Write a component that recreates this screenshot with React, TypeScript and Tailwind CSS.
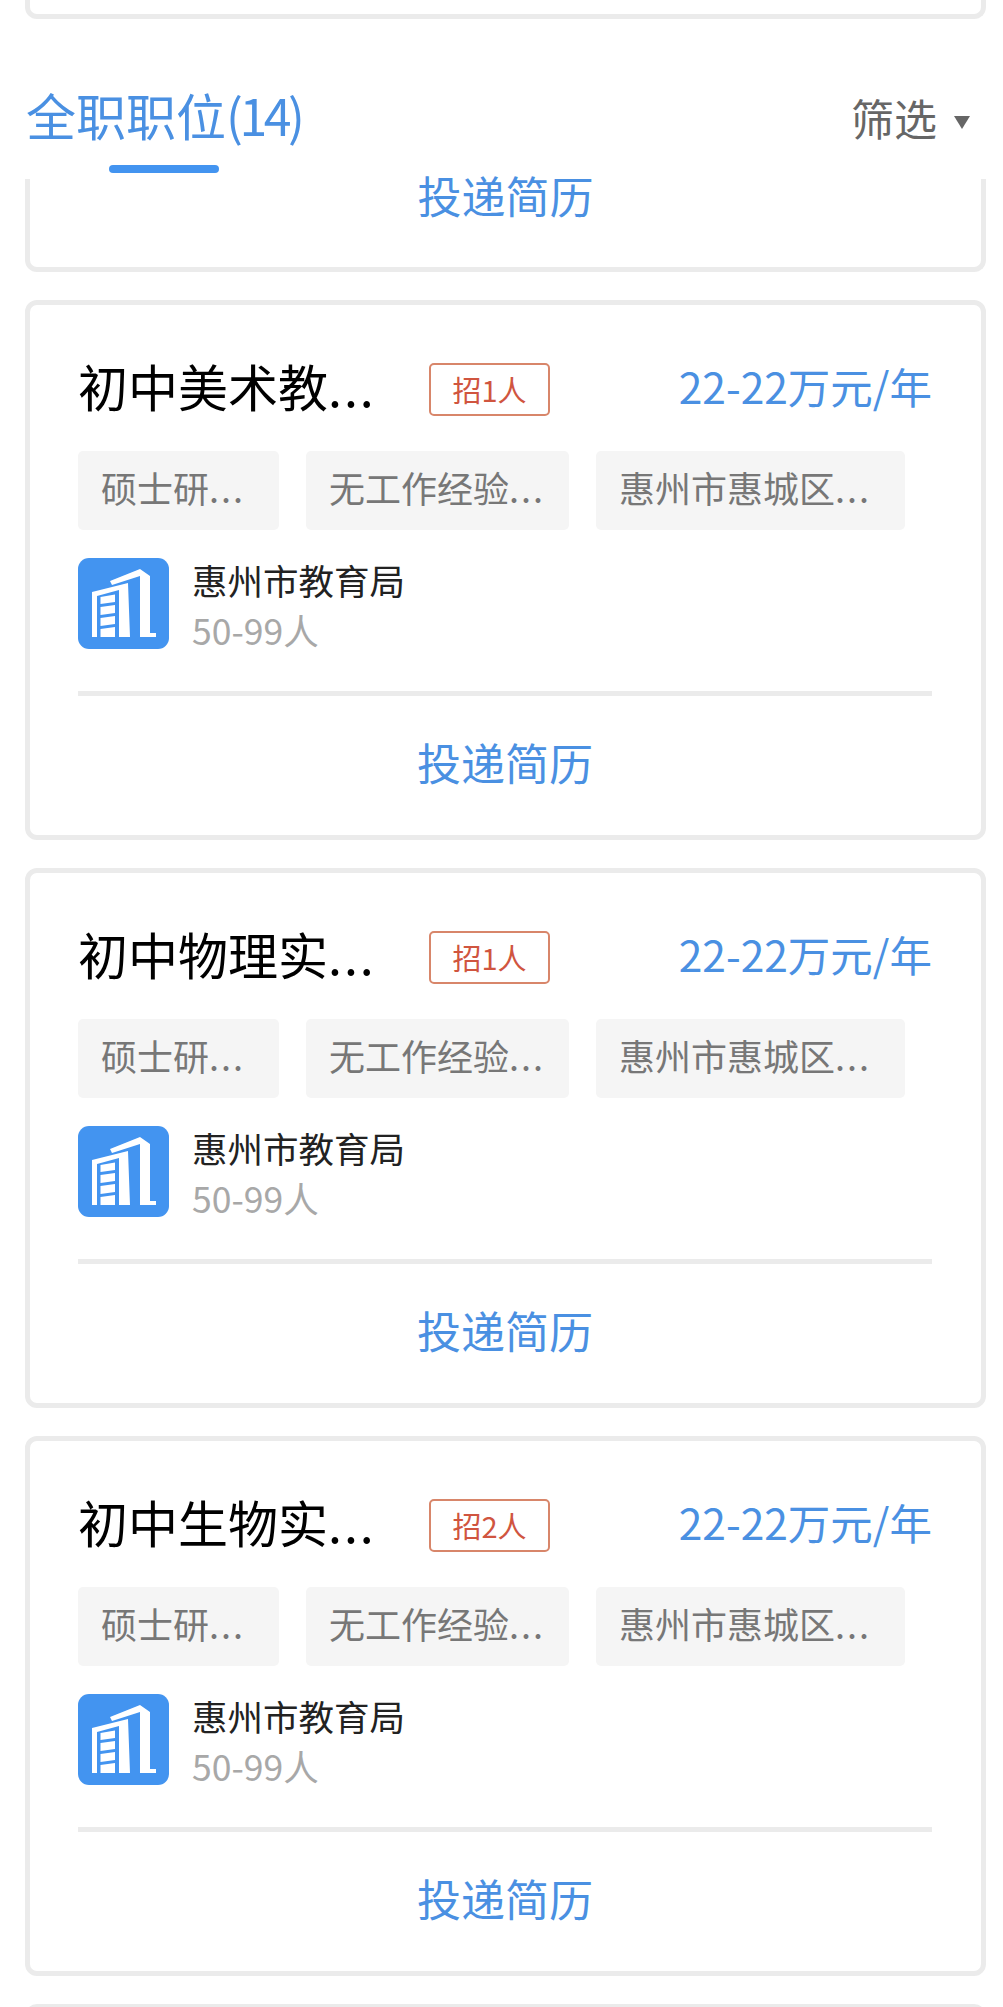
const jobs = [
  { title: "初中美术教", hire: "招1人" },
  { title: "初中物理实", hire: "招1人" },
  { title: "初中生物实", hire: "招2人" },
];

const font = { fontFamily: '"Noto Sans CJK SC", sans-serif' };

const BuildingLogo = () => (
  <svg viewBox="0 0 91 91" className="w-[91px] h-[91px] shrink-0">
    <rect width="91" height="91" rx="11" fill="#4394f0" />
    <g fill="#fff">
      <path d="M14 34 L50 25 L52 79 L41 79 L41 32 L19 38 L19 79 L14 79 Z" />
      <path d="M22.5 39 L37 36.5 L37 44 L22.5 46 Z" />
      <path d="M22.5 49 L37 47 L37 55 L22.5 57 Z" />
      <path d="M22.5 60 L37 58 L37 66 L22.5 68 Z" />
      <path d="M22.5 71 L37 69 L37 79 L22.5 79 Z" />
      <path d="M32 23 L62 11 L72 18 L72 75 L78 75 L78 79 L62 79 L62 18 L34 27 Z" />
    </g>
  </svg>
);

const Dots = () => <span className="tracking-[2px]">...</span>;

const Tag = ({ text, width }: { text: string; width: string }) => (
  <span className={`flex items-center h-[79px] pl-[23px] pb-[8px] rounded-[5px] bg-[#f5f5f5] text-[36px] text-[#777777] ${width}`}>
    {text}
    <Dots />
  </span>
);

const JobCard = ({ title, hire }: { title: string; hire: string }) => (
  <div className="h-[540px] shrink-0 rounded-[12px] border-[5px] border-[#ebebeb] bg-white pl-[48px] pr-[49px] pt-[58px]">
    <div className="flex items-center h-[53px]">
      <span className="w-[351px] pb-[8px] text-[50px] leading-[53px] text-black">
        {title}
        <Dots />
      </span>
      <span className="flex items-center justify-center w-[121px] h-[53px] rounded-[5px] border-2 border-[#d8866a] text-[29px] text-[#d0553f]">
        {hire}
      </span>
      <span className="ml-auto pb-[8px] text-[42.5px] leading-[53px] text-[#4a90e2]">22-22万元/年</span>
    </div>
    <div className="flex gap-[27px] mt-[35px]">
      <Tag text="硕士研" width="w-[201px]" />
      <Tag text="无工作经验" width="w-[263px]" />
      <Tag text="惠州市惠城区" width="w-[309px]" />
    </div>
    <div className="flex gap-[23px] mt-[28px]">
      <BuildingLogo />
      <div className="flex flex-col -mt-[3px]">
        <span className="text-[35.5px] leading-[50px] text-[#222222]">惠州市教育局</span>
        <span className="text-[35.5px] leading-[50px] text-[#a8a8a8]">50-99人</span>
      </div>
    </div>
    <div className="h-[5px] mt-[36px] bg-[#ebebeb]" />
    <div className="flex justify-center items-center h-[131px] text-[44px] text-[#4a90e2]">投递简历</div>
  </div>
);

export default function App() {
  return (
    <div className="h-[2007px] overflow-hidden bg-white" style={font}>
      {/* sliver of the card above */}
      <div className="h-[19px] ml-[25px] mr-[17px] rounded-b-[12px] border-x-[5px] border-b-[5px] border-[#ebebeb]" />

      {/* sticky tab bar */}
      <div className="relative h-[160px]">
        <div className="flex items-center justify-between h-[160px] pt-[30px] pl-[26px] pr-[28px]">
          <span className="text-[50px] text-[#4a90e2]">
            全职职位<span className="tracking-[-3.5px]">(14)</span>
          </span>
          <span className="flex items-center gap-[17px] mt-[6px] mr-[5px] text-[43px] text-[#666666]">
            筛选
            <span className="w-0 h-0 mt-[10px] border-x-[8.5px] border-t-[13px] border-x-transparent border-t-[#666666]" />
          </span>
        </div>
        <div className="absolute left-[109px] top-[146px] w-[110px] h-[8px] rounded-full bg-[#4394f0]" />
      </div>

      <div className="flex flex-col gap-[28px] ml-[25px] mr-[17px]">
        {/* card scrolled under the tab bar */}
        <div className="flex justify-center h-[93px] rounded-b-[12px] border-x-[5px] border-b-[5px] border-[#ebebeb] text-[44px] leading-[32px] text-[#4a90e2]">
          投递简历
        </div>
        {jobs.map((job) => (
          <JobCard key={job.title} title={job.title} hire={job.hire} />
        ))}
        <div className="h-[40px] rounded-t-[12px] border-x-[5px] border-t-[5px] border-[#ebebeb]" />
      </div>
    </div>
  );
}
